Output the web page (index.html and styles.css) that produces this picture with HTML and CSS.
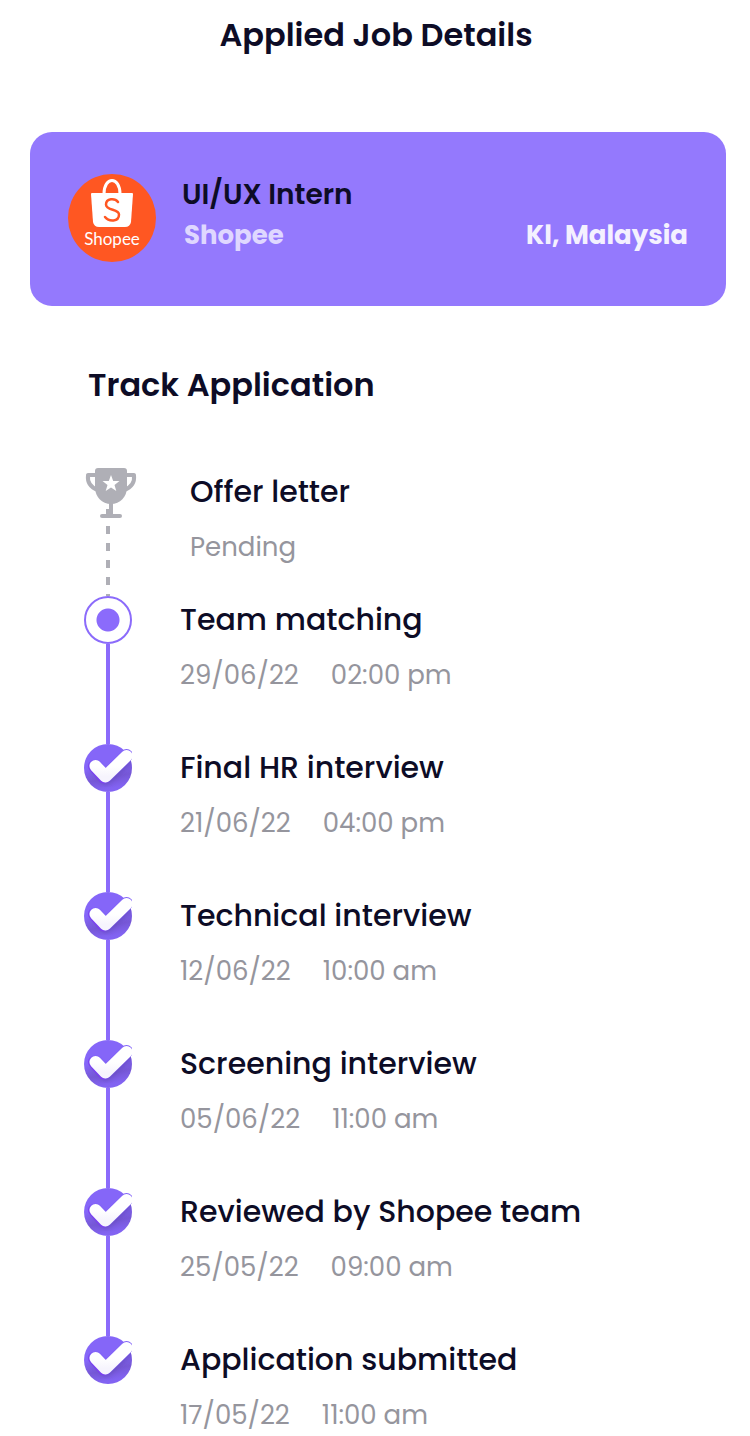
FILE: index.html
```html
<!DOCTYPE html>
<html lang="en">
<head>
<meta charset="utf-8">
<meta name="viewport" content="width=device-width, initial-scale=1">
<title>Applied Job Details</title>
<link rel="stylesheet" href="styles.css">
</head>
<body>
<svg class="defs" width="0" height="0" aria-hidden="true">
  <defs>
    <linearGradient id="disc" x1="0" y1="0" x2="0.2" y2="1">
      <stop offset="0.5" stop-color="#8566f8"/>
      <stop offset="0.78" stop-color="#7658d6"/>
      <stop offset="1" stop-color="#8263f2"/>
    </linearGradient>
    <linearGradient id="tick" x1="0" y1="0" x2="0" y2="1">
      <stop offset="0.5" stop-color="#ffffff"/>
      <stop offset="1" stop-color="#f6f4fd"/>
    </linearGradient>
    <filter id="soft" x="-30%" y="-30%" width="160%" height="160%"><feGaussianBlur stdDeviation="2"/></filter>
    <clipPath id="box"><rect width="48" height="48"/></clipPath>
    <clipPath id="round"><circle cx="24" cy="24" r="24"/></clipPath>
    <symbol id="done" viewBox="0 0 48 48">
      <circle cx="24" cy="24" r="24" fill="url(#disc)"/>
      <g clip-path="url(#round)">
        <path d="M12 25 22 36 46 15" fill="none" stroke="#5c3fb4" stroke-opacity=".5" stroke-width="10" stroke-linecap="round" stroke-linejoin="round" filter="url(#soft)"/>
      </g>
      <g clip-path="url(#box)" fill="none" stroke-linecap="round" stroke-linejoin="round">
        <path d="M10 22 20 33.500" stroke="#7c40f0" stroke-width="12"/>
        <path d="M11.500 21.500 21.500 32 42.500 11.500" stroke="#8364f8" stroke-width="13"/>
        <path d="M11.500 22 21.500 32.500 42.500 12" stroke="url(#tick)" stroke-width="12"/>
      </g>
    </symbol>
  </defs>
</svg>

<header class="topbar"><h1 class="heading">Applied Job Details</h1></header>

<main>
  <section class="job">
    <svg class="logo" viewBox="0 0 88 88" role="img" aria-label="Shopee logo">
      <circle cx="44" cy="44" r="44" fill="#ff5722"/>
      <path d="M36 20C36 2 52 2 52 20" fill="none" stroke="#fff" stroke-width="3"/>
      <path d="M24 19H64Q65 19 65 20L63 48Q62 53 57 53H31Q26 53 25 48L23 20Q23 19 24 19Z" fill="#fff"/>
      <path d="M50 28C47 24 38 24 38 30.500C38 37 51 34.500 51 40.500C51 48 41 48 37 43" fill="none" stroke="#ff5722" stroke-width="2.500" stroke-linecap="round"/>
      <text class="logo-text" x="44" y="71" text-anchor="middle">Shopee</text>
    </svg>
    <div class="job-info">
      <h2 class="job-title">UI/UX Intern</h2>
      <div class="job-meta"><span class="company">Shopee</span><span class="place">Kl, Malaysia</span></div>
    </div>
  </section>

  <section class="track">
    <h2 class="heading">Track Application</h2>
    <ol class="steps">
      <li class="step step-pending">
        <div class="rail">
          <svg class="trophy" viewBox="0 0 54 52" aria-hidden="true">
            <path d="M12 7H4C3 16 8 20 14 22M42 7H50C51 16 46 20 40 22" fill="none" stroke="#afafb6" stroke-width="4" stroke-linejoin="round"/>
            <path d="M14 0H40Q43 0 43 3V19C43 29 36 36 27 36S11 29 11 19V3Q11 0 14 0Z" fill="#afafb6"/>
            <path d="M27 7 29.200 13H35.500L30.500 17 32.300 23 27 19.500 21.700 23 23.500 17 18.500 13H24.800Z" fill="#fff"/>
            <path d="M25 34H29V47H22V41H25Z" fill="#afafb6"/>
            <rect x="16" y="46" width="22" height="4" rx="2" fill="#afafb6"/>
          </svg>
          <span class="line"></span>
        </div>
        <div class="step-text"><h3 class="step-title">Offer letter</h3><p class="step-info"><span>Pending</span></p></div>
      </li>
      <li class="step">
        <div class="rail"><span class="current"></span><span class="line"></span></div>
        <div class="step-text"><h3 class="step-title">Team matching</h3><p class="step-info"><span>29/06/22</span><span>02:00 pm</span></p></div>
      </li>
      <li class="step">
        <div class="rail"><svg class="done"><use href="#done"/></svg><span class="line"></span></div>
        <div class="step-text"><h3 class="step-title">Final HR interview</h3><p class="step-info"><span>21/06/22</span><span>04:00 pm</span></p></div>
      </li>
      <li class="step">
        <div class="rail"><svg class="done"><use href="#done"/></svg><span class="line"></span></div>
        <div class="step-text"><h3 class="step-title">Technical interview</h3><p class="step-info"><span>12/06/22</span><span>10:00 am</span></p></div>
      </li>
      <li class="step">
        <div class="rail"><svg class="done"><use href="#done"/></svg><span class="line"></span></div>
        <div class="step-text"><h3 class="step-title">Screening interview</h3><p class="step-info"><span>05/06/22</span><span>11:00 am</span></p></div>
      </li>
      <li class="step">
        <div class="rail"><svg class="done"><use href="#done"/></svg><span class="line"></span></div>
        <div class="step-text"><h3 class="step-title">Reviewed by Shopee team</h3><p class="step-info"><span>25/05/22</span><span>09:00 am</span></p></div>
      </li>
      <li class="step">
        <div class="rail"><svg class="done"><use href="#done"/></svg></div>
        <div class="step-text"><h3 class="step-title">Application submitted</h3><p class="step-info"><span>17/05/22</span><span>11:00 am</span></p></div>
      </li>
    </ol>
  </section>
</main>
</body>
</html>
```
FILE: styles.css
```css
* { box-sizing: border-box; }
body {
  margin: 0;
  background: #fff;
  color: #0d0c26;
  font-family: Poppins, Inter, "Liberation Sans", sans-serif;
}
h1, h2, h3, p, ol { margin: 0; padding: 0; }
.defs { position: absolute; }

.topbar { padding: 10px 24px 0 26px; text-align: center; }
.heading { font-size: 32px; line-height: 50px; font-weight: 600; }

.job {
  display: flex;
  gap: 26px;
  margin: 72px 24px 0 30px;
  padding: 42px 38px 44px;
  border-radius: 22px;
  background: #9479fd;
}
.logo { width: 88px; height: 88px; flex: none; }
.logo-text { font-family: Lato, sans-serif; font-size: 17px; fill: #fff; }
.job-info { flex: 1; }
.job-title { font-size: 28px; line-height: 42px; font-weight: 600; }
.job-meta {
  display: flex;
  justify-content: space-between;
  padding-left: 2px;
  font-size: 26px;
  line-height: 38px;
  font-weight: 700;
}
.company { color: #dfd7ff; }
.place { color: #f4f1ff; }

.track { padding: 54px 24px 0 84px; }
.track > .heading { padding-left: 4px; }
.steps { list-style: none; margin-top: 58px; }
.step {
  display: grid;
  grid-template-columns: 48px 1fr;
  column-gap: 48px;
  min-height: 148px;
}
.step:last-child { min-height: 0; }
.step-pending { min-height: 128px; column-gap: 58px; }
.rail { display: flex; flex-direction: column; align-items: center; }
.line { flex: 1; width: 4px; background: #8b6bfb; }
.trophy { width: 54px; height: 52px; flex: none; align-self: flex-start; }
.step-pending .line {
  margin-top: 6px;
  background: repeating-linear-gradient(#afafb6 0 8px, transparent 8px 17px);
}
.current {
  width: 48px;
  height: 48px;
  border: 2px solid #8b6bfb;
  border-radius: 50%;
  background: radial-gradient(circle, #8b6bfb 11px, #fff 12px);
}
.done { display: block; width: 48px; height: 48px; flex: none; }

.step-title { font-size: 30px; line-height: 48px; font-weight: 500; }
.step-info {
  display: flex;
  gap: 32px;
  margin-top: 10px;
  color: #95959d;
  font-size: 26px;
  line-height: 42px;
}
```
